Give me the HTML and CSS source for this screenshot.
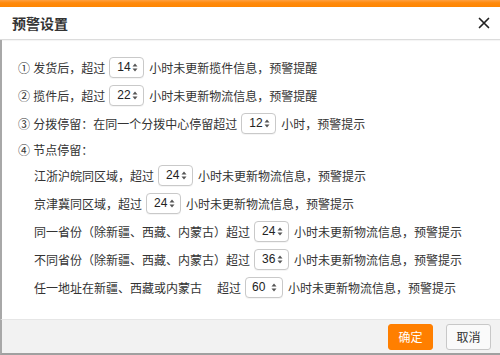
FILE: index.html
```html
<!DOCTYPE html>
<html lang="zh">
<head>
<meta charset="utf-8">
<link rel="stylesheet" href="styles.css">
</head>
<body>
<div class="dialog">
  <div class="topbar"></div>
  <div class="header">
    <span class="title">预警设置</span>
    <svg class="close" width="12" height="12" viewBox="0 0 12 12"><path d="M1.5 1.5 L10.5 10.5 M10.5 1.5 L1.5 10.5" stroke="#222" stroke-width="1.7" stroke-linecap="round"/></svg>
  </div>
  <div class="content">
    <div class="row">① 发货后，超过<span class="sel"><span class="val">14</span><svg class="arr" width="6" height="9" viewBox="0 0 6 9"><path d="M3 0.5 L5.5 3.5 H0.5 Z M3 8.5 L5.5 5.5 H0.5 Z" fill="#555"/></svg></span>小时未更新揽件信息，预警提醒</div>
    <div class="row">② 揽件后，超过<span class="sel"><span class="val">22</span><svg class="arr" width="6" height="9" viewBox="0 0 6 9"><path d="M3 0.5 L5.5 3.5 H0.5 Z M3 8.5 L5.5 5.5 H0.5 Z" fill="#555"/></svg></span>小时未更新物流信息，预警提醒</div>
    <div class="row">③ 分拨停留：在同一个分拨中心停留超过<span class="sel"><span class="val">12</span><svg class="arr" width="6" height="9" viewBox="0 0 6 9"><path d="M3 0.5 L5.5 3.5 H0.5 Z M3 8.5 L5.5 5.5 H0.5 Z" fill="#555"/></svg></span>小时，预警提示</div>
    <div class="row short">④ 节点停留：</div>
    <div class="row sub">江浙沪皖同区域，超过<span class="sel"><span class="val">24</span><svg class="arr" width="6" height="9" viewBox="0 0 6 9"><path d="M3 0.5 L5.5 3.5 H0.5 Z M3 8.5 L5.5 5.5 H0.5 Z" fill="#555"/></svg></span>小时未更新物流信息，预警提示</div>
    <div class="row sub">京津冀同区域，超过<span class="sel"><span class="val">24</span><svg class="arr" width="6" height="9" viewBox="0 0 6 9"><path d="M3 0.5 L5.5 3.5 H0.5 Z M3 8.5 L5.5 5.5 H0.5 Z" fill="#555"/></svg></span>小时未更新物流信息，预警提示</div>
    <div class="row sub">同一省份（除新疆、西藏、内蒙古）超过<span class="sel"><span class="val">24</span><svg class="arr" width="6" height="9" viewBox="0 0 6 9"><path d="M3 0.5 L5.5 3.5 H0.5 Z M3 8.5 L5.5 5.5 H0.5 Z" fill="#555"/></svg></span>小时未更新物流信息，预警提示</div>
    <div class="row sub">不同省份（除新疆、西藏、内蒙古）超过<span class="sel"><span class="val">36</span><svg class="arr" width="6" height="9" viewBox="0 0 6 9"><path d="M3 0.5 L5.5 3.5 H0.5 Z M3 8.5 L5.5 5.5 H0.5 Z" fill="#555"/></svg></span>小时未更新物流信息，预警提示</div>
    <div class="row sub">任一地址在新疆、西藏或内蒙古<span class="gap">超过</span><span class="sel wide"><span class="val">60</span><svg class="arr" width="6" height="9" viewBox="0 0 6 9"><path d="M3 0.5 L5.5 3.5 H0.5 Z M3 8.5 L5.5 5.5 H0.5 Z" fill="#555"/></svg></span>小时未更新物流信息，预警提示</div>
  </div>
  <div class="footer">
    <button class="btn primary">确定</button>
    <button class="btn">取消</button>
  </div>
</div>
</body>
</html>
```
FILE: styles.css
```css
html, body {
  margin: 0;
  padding: 0;
  background: #fff;
}
body {
  width: 500px;
  height: 355px;
  overflow: hidden;
  font-family: "Liberation Sans", "Noto Sans CJK SC", sans-serif;
  font-size: 12px;
  color: #333;
}
.dialog {
  display: flex;
  flex-direction: column;
  height: 355px;
}
.topbar {
  height: 7px;
  background: linear-gradient(#ffa040, #ff8a0d 40%, #ff8500);
}
.header {
  height: 32px;
  display: flex;
  align-items: center;
  justify-content: space-between;
  padding: 0 10px 0 12px;
  border-bottom: 1px solid #dcdcdc;
  box-shadow: 0 1px 1px rgba(0,0,0,0.04);
}
.title {
  font-family: "Noto Sans CJK SC", sans-serif;
  font-size: 14px;
  font-weight: bold;
  color: #333;
}
.close {
  display: block;
}
.content {
  flex: 1;
  border-left: 2px solid #a8a8a8;
  padding: 13px 0 0 16px;
}
.row {
  height: 28px;
  display: flex;
  align-items: center;
  white-space: nowrap;
}
.row.short {
  height: 24px;
}
.row.sub {
  padding-left: 16px;
}
.gap {
  margin-left: 15px;
}
.sel {
  display: inline-flex;
  align-items: center;
  justify-content: space-between;
  box-sizing: border-box;
  width: 35px;
  height: 21px;
  margin: 0 5px 0 4px;
  padding: 0 5px 0 7px;
  border: 1px solid #c9c9c9;
  border-radius: 4px;
  background: #fff;
  box-shadow: 0 1px 0 rgba(0,0,0,0.04);
  font-family: "Liberation Sans", sans-serif;
  font-size: 12px;
  color: #222;
}
.sel.wide {
  width: 38px;
  padding-left: 6px;
}
.arr {
  display: block;
}
.footer {
  height: 36px;
  box-sizing: border-box;
  background: #f2f2f2;
  border-top: 1px solid #e6e6e6;
  border-left: 2px solid #a8a8a8;
  border-bottom: 2px solid #a0a0a0;
  display: flex;
  align-items: center;
  justify-content: flex-end;
  gap: 13px;
  padding: 0 9px 0 0;
}
.btn {
  width: 45px;
  height: 26px;
  border: 1px solid #c8c8c8;
  border-radius: 3px;
  background: #fafafa;
  font-family: "Noto Sans CJK SC", sans-serif;
  font-size: 12px;
  color: #333;
  padding: 0;
}
.btn.primary {
  background: #ff7f00;
  border-color: #ff7f00;
  color: #fff;
}
```
